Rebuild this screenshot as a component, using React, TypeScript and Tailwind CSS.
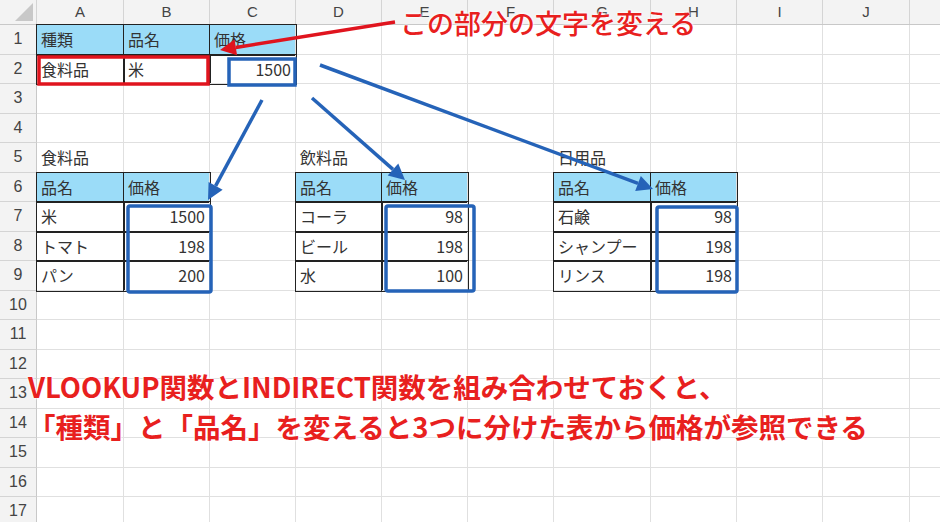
const cols = ["A", "B", "C", "D", "E", "F", "G", "H", "I", "J"];
const widths = [87, 86, 86, 86, 86, 86, 97, 86, 86, 87];

type Cell = { t: string; h?: boolean; r?: boolean; b?: boolean };
const data: Record<number, Record<number, Cell>> = {
  1: { 0: { t: "種類", h: true, b: true }, 1: { t: "品名", h: true, b: true }, 2: { t: "価格", h: true, b: true } },
  2: { 0: { t: "食料品", b: true }, 1: { t: "米", b: true }, 2: { t: "1500", r: true, b: true } },
  5: { 0: { t: "食料品" }, 3: { t: "飲料品" }, 6: { t: "日用品" } },
  6: {
    0: { t: "品名", h: true, b: true }, 1: { t: "価格", h: true, b: true },
    3: { t: "品名", h: true, b: true }, 4: { t: "価格", h: true, b: true },
    6: { t: "品名", h: true, b: true }, 7: { t: "価格", h: true, b: true },
  },
  7: {
    0: { t: "米", b: true }, 1: { t: "1500", r: true, b: true },
    3: { t: "コーラ", b: true }, 4: { t: "98", r: true, b: true },
    6: { t: "石鹸", b: true }, 7: { t: "98", r: true, b: true },
  },
  8: {
    0: { t: "トマト", b: true }, 1: { t: "198", r: true, b: true },
    3: { t: "ビール", b: true }, 4: { t: "198", r: true, b: true },
    6: { t: "シャンプー", b: true }, 7: { t: "198", r: true, b: true },
  },
  9: {
    0: { t: "パン", b: true }, 1: { t: "200", r: true, b: true },
    3: { t: "水", b: true }, 4: { t: "100", r: true, b: true },
    6: { t: "リンス", b: true }, 7: { t: "198", r: true, b: true },
  },
};

function Arrow({ x1, y1, x2, y2, c }: { x1: number; y1: number; x2: number; y2: number; c: string }) {
  const a = Math.atan2(y2 - y1, x2 - x1);
  const L = 16, W = 8;
  const bx = x2 - L * Math.cos(a), by = y2 - L * Math.sin(a);
  const px = -Math.sin(a) * W, py = Math.cos(a) * W;
  return (
    <g>
      <line x1={x1} y1={y1} x2={bx} y2={by} stroke={c} strokeWidth={3.5} />
      <polygon points={`${x2},${y2} ${bx + px},${by + py} ${bx - px},${by - py}`} fill={c} />
    </g>
  );
}

export default function App() {
  const rows = Array.from({ length: 17 }, (_, i) => i + 1);
  return (
    <div className="relative w-[940px] h-[522px] overflow-hidden bg-white text-[16px] text-[#333]" style={{ fontFamily: '"Noto Sans CJK JP", "Noto Sans", sans-serif' }}>
      {/* column headers */}
      <div className="flex h-[25px] bg-[#f3f3f3] border-b border-[#c8c8c8]">
        <div className="w-[37px] shrink-0 border-r border-[#d4d4d4] relative">
          <div className="absolute right-[3px] bottom-[3px] w-0 h-0 border-l-[18px] border-l-transparent border-b-[18px] border-b-[#c8c8c8]" />
        </div>
        {cols.map((c, i) => (
          <div key={c} style={{ width: widths[i] }} className="shrink-0 flex items-center justify-center border-r border-[#d4d4d4] text-[#444] text-[15px]">
            <span style={{ fontFamily: '"Liberation Sans", sans-serif' }}>{c}</span>
          </div>
        ))}
        <div className="flex-1" />
      </div>
      {rows.map((r) => (
        <div key={r} className="flex h-[29.5px]">
          <div className="w-[37px] shrink-0 bg-[#f3f3f3] border-r border-[#c8c8c8] border-b border-b-[#d4d4d4] flex items-center justify-center text-[#444]" style={{ fontFamily: '"Liberation Sans", sans-serif' }}>
            {r}
          </div>
          {cols.map((c, i) => {
            const cell = data[r]?.[i];
            return (
              <div
                key={c}
                style={{ width: widths[i] }}
                className={`shrink-0 flex items-center px-[4px] whitespace-nowrap border-r border-b border-[#e0e0e0] ${cell?.h ? "bg-[#9bdcf8]" : ""} ${cell?.r ? "justify-end font-['Liberation_Sans']" : ""} ${cell?.b ? "outline outline-1 outline-[#222] relative" : ""}`}
              >
                {cell?.t}
              </div>
            );
          })}
          <div className="flex-1 border-b border-[#e0e0e0]" />
        </div>
      ))}

      {/* annotations overlay */}
      <svg className="absolute inset-0 pointer-events-none" width={940} height={522}>
        <rect x={39} y={57} width={169} height={27} fill="none" stroke="#e0141e" strokeWidth={3.5} />
        <rect x={229} y={59} width={66} height={26} fill="none" stroke="#2563b8" strokeWidth={3.5} />
        <rect x={128} y={206} width={83} height={86} rx={2} fill="none" stroke="#2563b8" strokeWidth={3.5} />
        <rect x={386} y={206} width={88} height={85} rx={2} fill="none" stroke="#2563b8" strokeWidth={3.5} />
        <rect x={657} y={207} width={80} height={85} rx={2} fill="none" stroke="#2563b8" strokeWidth={3.5} />
        <Arrow x1={395} y1={22} x2={220} y2={50} c="#e0141e" />
        <Arrow x1={262} y1={100} x2={208} y2={200} c="#2563b8" />
        <Arrow x1={312} y1={98} x2={405} y2={180} c="#2563b8" />
        <Arrow x1={320} y1={65} x2={653} y2={189} c="#2563b8" />
      </svg>

      <div className="absolute left-[400px] top-[9px] text-[27px] font-medium text-[#e8201e] leading-none [text-shadow:0_0_3px_white,0_0_3px_white]">
        この部分の文字を変える
      </div>
      <div className="absolute left-[28px] top-[366px] text-[27.5px] font-bold text-[#e8201e] leading-[40px] [text-shadow:0_0_3px_white,0_0_3px_white]">
        <div>VLOOKUP関数とINDIRECT関数を組み合わせておくと、</div>
        <div>「種類」と「品名」を変えると3つに分けた表から価格が参照できる</div>
      </div>
    </div>
  );
}
